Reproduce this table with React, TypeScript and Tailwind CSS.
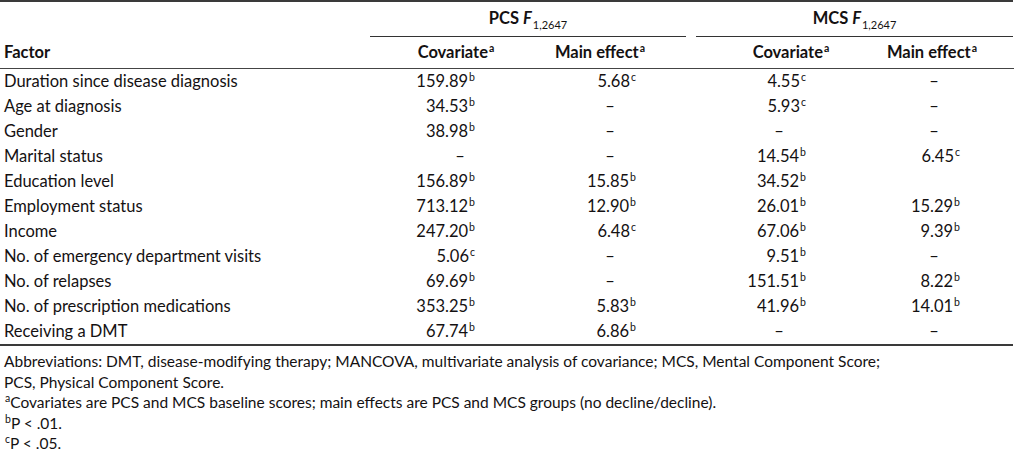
import React from "react";

type Cell = [string, string] | null | "";

const rows: [string, Cell, Cell, Cell, Cell][] = [
  ["Duration since disease diagnosis", ["159.89", "b"], ["5.68", "c"], ["4.55", "c"], null],
  ["Age at diagnosis", ["34.53", "b"], null, ["5.93", "c"], null],
  ["Gender", ["38.98", "b"], null, null, null],
  ["Marital status", null, null, ["14.54", "b"], ["6.45", "c"]],
  ["Education level", ["156.89", "b"], ["15.85", "b"], ["34.52", "b"], ""],
  ["Employment status", ["713.12", "b"], ["12.90", "b"], ["26.01", "b"], ["15.29", "b"]],
  ["Income", ["247.20", "b"], ["6.48", "c"], ["67.06", "b"], ["9.39", "b"]],
  ["No. of emergency department visits", ["5.06", "c"], null, ["9.51", "b"], null],
  ["No. of relapses", ["69.69", "b"], null, ["151.51", "b"], ["8.22", "b"]],
  ["No. of prescription medications", ["353.25", "b"], ["5.83", "b"], ["41.96", "b"], ["14.01", "b"]],
  ["Receiving a DMT", ["67.74", "b"], ["6.86", "b"], null, null],
];

const cols = [
  { w: "w-[158px]", hdr: "pl-[14px]", num: "pr-[53px]", dash: "pl-[22px]", label: "Covariate" },
  { w: "w-[158px]", hdr: "pr-[14px]", num: "pr-[50px]", dash: "pl-[6px]", label: "Main effect" },
  { w: "w-[158px]", hdr: "pl-[32px]", num: "pr-[48px]", dash: "pl-[8px]", label: "Covariate" },
  { w: "w-[160px]", hdr: "pr-[4px]", num: "pr-[54px]", dash: "pl-[0px]", label: "Main effect" },
];

function Sup({ c }: { c: string }) {
  return <sup className="text-[10.5px] -top-[6px] ml-[1px]">{c}</sup>;
}

function DataCell({ cell, i }: { cell: Cell; i: number }) {
  const col = cols[i];
  if (cell === "") return <div className={`${col.w} shrink-0`} />;
  if (cell === null)
    return <div className={`${col.w} shrink-0 text-center ${col.dash}`}>–</div>;
  return (
    <div className={`${col.w} shrink-0 text-right ${col.num}`}>
      {cell[0]}
      <Sup c={cell[1]} />
    </div>
  );
}

function Gap() {
  return <div className="w-[10px] shrink-0" />;
}

export default function App() {
  return (
    <div
      className="w-[1014px] h-[453px] bg-white text-[#141112] text-[16.5px] overflow-hidden"
      style={{ fontFamily: 'Lato, "Open Sans", sans-serif' }}
    >
      <div className="h-[2px] bg-[#3a3a3a] mr-[1px]" />
      {/* header row 1 */}
      <div className="flex h-[35px]">
        <div className="w-[370px] shrink-0" />
        <div className="w-[316px] shrink-0 flex items-center justify-center border-b border-[#333] font-bold">
          <span className="-mt-[2px]">
            PCS <i>F</i>
            <sub className="text-[11px] font-normal -bottom-[5px] ml-[1px]">1,2647</sub>
          </span>
        </div>
        <Gap />
        <div className="w-[317px] shrink-0 flex items-center justify-center border-b border-[#333] font-bold">
          <span className="-mt-[2px]">
            MCS <i>F</i>
            <sub className="text-[11px] font-normal -bottom-[5px] ml-[1px]">1,2647</sub>
          </span>
        </div>
      </div>
      {/* header row 2 */}
      <div className="flex h-[32px] items-center border-b border-[#444] font-bold">
        <div className="w-[370px] shrink-0 pl-[4px]">Factor</div>
        {cols.map((c, i) => (
          <React.Fragment key={i}>
            {i === 2 && <Gap />}
            <div className={`${c.w} shrink-0 text-center ${c.hdr}`}>
              {c.label}
              <Sup c="a" />
            </div>
          </React.Fragment>
        ))}
      </div>
      {/* body */}
      <div className="flex flex-col">
        {rows.map((r, ri) => (
          <div key={ri} className="flex h-[25px] items-center">
            <div className="w-[370px] shrink-0 pl-[4px]">{r[0]}</div>
            <DataCell cell={r[1]} i={0} />
            <DataCell cell={r[2]} i={1} />
            <Gap />
            <DataCell cell={r[3]} i={2} />
            <DataCell cell={r[4]} i={3} />
          </div>
        ))}
      </div>
      <div className="h-[2px] bg-[#3a3a3a] mr-[1px]" />
      {/* footnotes */}
      <div className="pl-[4px] pt-[5px] leading-[20.5px] text-[15.5px]">
        <div>
          Abbreviations: DMT, disease-modifying therapy; MANCOVA, multivariate analysis of covariance; MCS, Mental Component Score;
        </div>
        <div>PCS, Physical Component Score.</div>
        <div>
          <Sup c="a" />
          Covariates are PCS and MCS baseline scores; main effects are PCS and MCS groups (no decline/decline).
        </div>
        <div>
          <Sup c="b" />P &lt; .01.
        </div>
        <div>
          <Sup c="c" />P &lt; .05.
        </div>
      </div>
    </div>
  );
}
